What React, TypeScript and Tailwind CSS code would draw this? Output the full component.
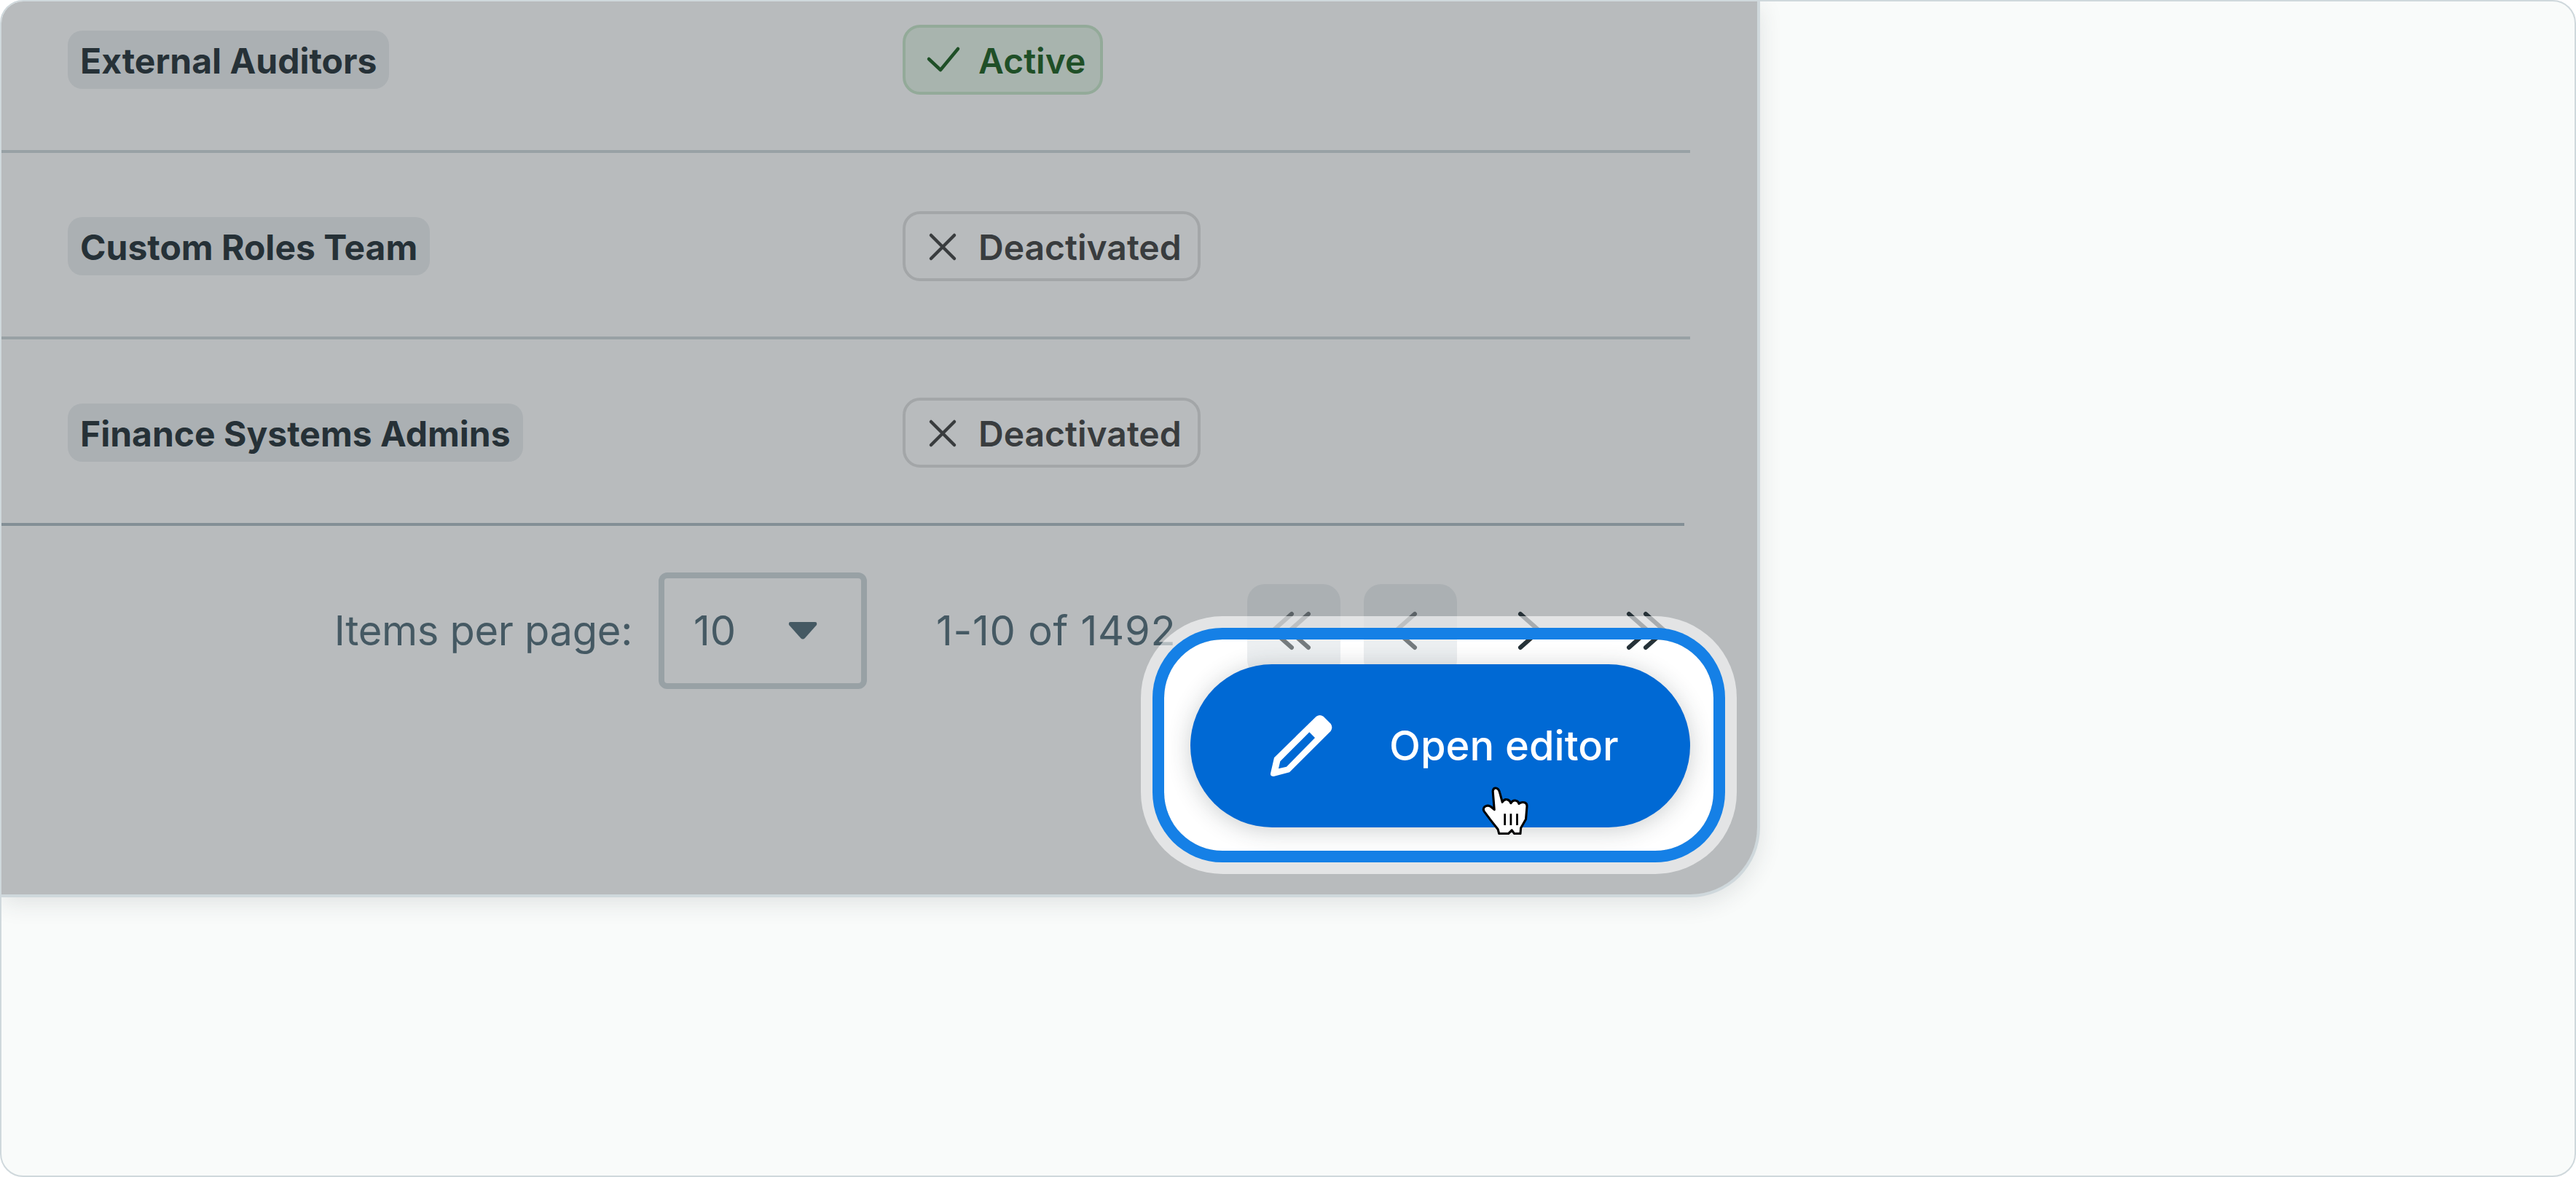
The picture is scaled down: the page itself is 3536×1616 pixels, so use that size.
const FONT = "font-['Inter','Noto_Sans',sans-serif]";

function Name({ children }: { children: string }) {
  return (
    <span className="flex h-[80px] items-center rounded-[20px] bg-[#eceff1] px-[17px] pt-[3px] text-[48px] font-bold text-[#263238]">
      {children}
    </span>
  );
}

function Status({ active }: { active?: boolean }) {
  return (
    <span
      className={
        active
          ? "flex h-[96px] items-center gap-[24px] rounded-[24px] border-4 border-[#c8e6c9] bg-[#e8f5e9] pl-[28px] pr-[20px] text-[48px] font-semibold text-[#1b5e20]"
          : "flex h-[96px] items-center gap-[24px] rounded-[24px] border-4 border-[#e0e0e0] bg-white pl-[28px] pr-[22px] text-[48px] font-semibold text-[#424242]"
      }
    >
      <svg viewBox="0 0 48 48" className="h-[48px] w-[48px]" fill="none" stroke="currentColor" strokeWidth="4.5" strokeLinecap="round" strokeLinejoin="round">
        {active ? <path d="M4 23 L20 38 L44 9" /> : <path d="M7 9 L39 41 M39 9 L7 41" />}
      </svg>
      <span className="pt-[3px]">{active ? "Active" : "Deactivated"}</span>
    </span>
  );
}

function Row({ name, active, last }: { name: string; active?: boolean; last?: boolean }) {
  return (
    <div className={last ? "flex h-[252px] items-center pt-[4px]" : "flex h-[256px] items-center border-b-4 border-[#cfd8dc] pt-[4px]"}>
      <div className="w-[1237px] pl-[91px]">
        <span className="inline-flex"><Name>{name}</Name></span>
      </div>
      <Status active={active} />
    </div>
  );
}

function PageButton({ disabled, paths }: { disabled?: boolean; paths: string }) {
  return (
    <div className={disabled ? "h-[128px] w-[128px] rounded-[24px] bg-[#eceff1] text-[#757b7e]" : "h-[128px] w-[128px] rounded-[24px] text-[#263238]"}>
      <svg viewBox="0 0 128 128" className="h-[128px] w-[128px]" fill="none" stroke="currentColor" strokeWidth="6" strokeLinecap="round" strokeLinejoin="round">
        <path d={paths} />
      </svg>
    </div>
  );
}

export default function App() {
  return (
    <div className={`${FONT} h-[1616px] w-[3536px] overflow-hidden rounded-[32px] border-2 border-[#cfd8dc] bg-[#f9fbfa]`}>
      <div className="relative h-[1230px] w-[2414px] overflow-hidden rounded-br-[96px] border-r-4 border-b-4 border-[#cfd8dc] bg-white shadow-[0_8px_32px_rgba(38,50,56,0.12)]">
        <div className="-mt-[48px] w-[2318px]">
          <Row name="External Auditors" active />
          <Row name="Custom Roles Team" />
          <Row name="Finance Systems Admins" last />
          <div className="w-[2310px] border-t-4 border-[#b0bec5]" />
          <div className="flex items-center justify-end pt-[64px] text-[56px] text-[#546e7a]">
            <span className="tracking-[-0.3px]">Items per page:</span>
            <div className="ml-[36px] flex h-[160px] w-[286px] items-center rounded-[12px] border-8 border-[#cfd8dc] pl-[40px]">
              <span>10</span>
              <svg viewBox="0 0 40 24" className="ml-[72px] h-[24px] w-[40px]" fill="#546e7a">
                <path d="M3 0 H37 Q40 0 39 4 L23 22 Q20 25 17 22 L1 4 Q0 0 3 0 Z" />
              </svg>
            </div>
            <span className="ml-[95px] w-[327px] whitespace-nowrap tracking-[0.75px]">1-10 of 1492</span>
            <div className="ml-[100px] flex gap-[32px]">
              <PageButton disabled paths="M61 41 L35 64 L61 87 M84 41 L58 64 L84 87" />
              <PageButton disabled paths="M70 41 L44 64 L70 87" />
              <PageButton paths="M55 41 L81 64 L55 87" />
              <PageButton paths="M44 41 L70 64 L44 87 M67 41 L93 64 L67 87" />
            </div>
          </div>
        </div>

        <div className="absolute inset-0 overflow-hidden">
          <div className="absolute left-[1596px] top-[876px] h-[290px] w-[754px] rounded-[80px] pl-[36px] pt-[34px] shadow-[0_0_0_16px_#1580e6,0_0_0_32px_rgba(255,255,255,0.6),0_0_0_4000px_rgba(38,50,56,0.33)]">
            <div className="relative flex h-[224px] w-[686px] items-center gap-[78px] rounded-full bg-[#0069d4] pl-[110px] text-[56px] font-medium text-white shadow-[0_4px_32px_rgba(38,50,56,0.24)]">
              <svg viewBox="0 0 85 84" className="h-[84px] w-[85px]" fill="#ffffff" fillRule="evenodd">
                <path d="M62.7 1.7 Q67.7 -1.5 72.7 1.7 L82.7 11.7 Q86 16.7 82.7 21.7 L26 78.3 L4.3 84 Q-0.5 84 0 80 L5 58.3 Z M53.3 23.3 L61 31 L22 70.7 L11 73.3 L13.3 63.3 Z" />
              </svg>
              <span>Open editor</span>
              <svg viewBox="106 60 186 192" className="absolute left-[400px] top-[168px] h-[66px] w-[64px]" fill="#ffffff" stroke="#000000" strokeWidth="9" strokeLinejoin="round" strokeLinecap="round">
                <path d="M150 78 Q152 65 162 66 Q174 68 178 85 L188 122 Q196 108 208 112 Q218 114 222 126 Q230 113 242 116 Q252 118 254 128 Q266 120 278 124 Q288 128 286 142 L282 190 L262 225 L260 248 L236 248 L226 234 L212 248 L175 248 L170 230 L140 192 L116 160 Q108 148 118 140 Q130 132 142 140 L156 152 Z" />
                <path d="M198 168 V214 M222 168 V214 M247 168 V214" fill="none" strokeWidth="8" strokeLinecap="butt" />
              </svg>
            </div>
          </div>
        </div>
      </div>
    </div>
  );
}
